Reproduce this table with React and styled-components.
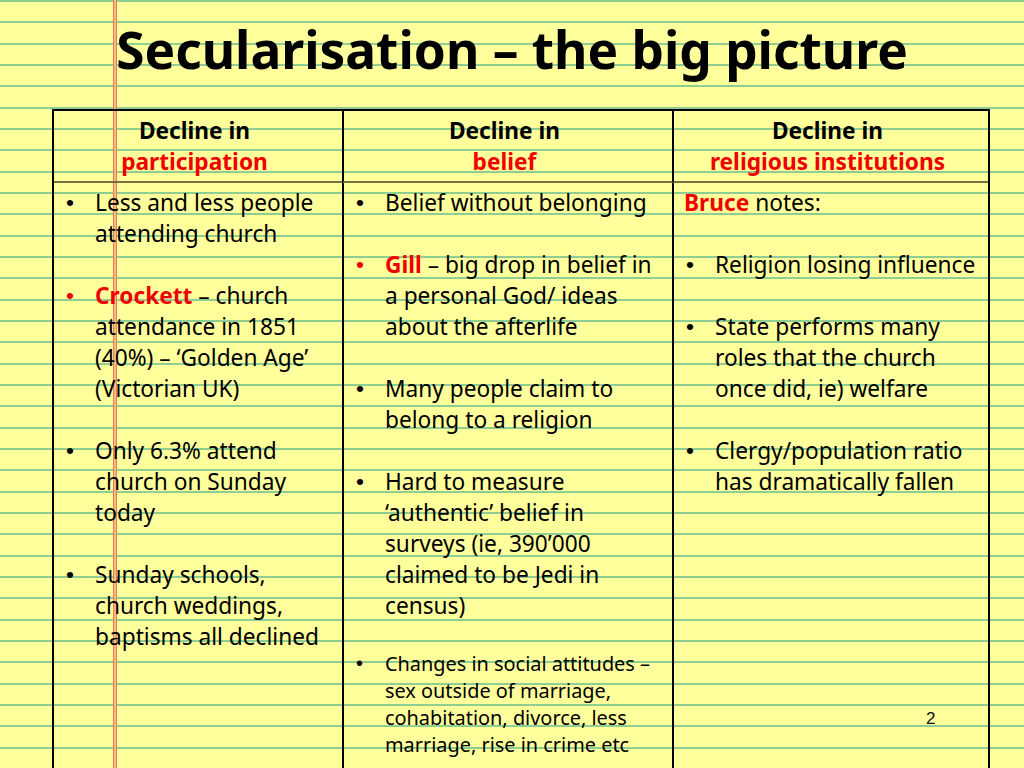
import React from 'react'
import styled, { createGlobalStyle } from 'styled-components'

const GlobalStyle = createGlobalStyle`
  html, body {
    margin: 0;
    padding: 0;
    overflow: hidden;
  }
  * {
    box-sizing: border-box;
  }
`

const RED = '#f20000'

const columns = [
  {
    title: 'participation',
    items: [
      { text: 'Less and less people attending church' },
      { lead: 'Crockett', text: ' – church attendance in 1851 (40%) – ‘Golden Age’ (Victorian UK)', red: true },
      { text: 'Only 6.3% attend church on Sunday today' },
      { text: 'Sunday schools, church weddings, baptisms all declined' },
    ],
  },
  {
    title: 'belief',
    items: [
      { text: 'Belief without belonging' },
      { lead: 'Gill', text: ' – big drop in belief in a personal God/ ideas about the afterlife', red: true },
      { text: 'Many people claim to belong to a religion' },
      { text: 'Hard to measure ‘authentic’ belief in surveys (ie, 390’000 claimed to be Jedi in census)' },
      { text: 'Changes in social attitudes – sex outside of marriage, cohabitation, divorce, less marriage, rise in crime etc', small: true },
    ],
  },
  {
    title: 'religious institutions',
    intro: true,
    items: [
      { text: 'Religion losing influence' },
      { text: 'State performs many roles that the church once did, ie) welfare' },
      { text: 'Clergy/population ratio has dramatically fallen' },
    ],
  },
]

export default function App() {
  return (
    <Page>
      <GlobalStyle />
      <Title>Secularisation – the big picture</Title>
      <Table>
        {columns.map((col, i) => (
          <HeadCell key={'h' + i} divider={i > 0}>
            <div>Decline in</div>
            <RedText>{col.title}</RedText>
          </HeadCell>
        ))}
        {columns.map((col, i) => (
          <BodyCell key={'b' + i} divider={i > 0}>
            {col.intro && (
              <Intro>
                <RedText>Bruce</RedText> notes:
              </Intro>
            )}
            {col.items.map((item, j) => (
              <Item key={j} small={item.small}>
                <Bullet red={item.red}>•</Bullet>
                <span>
                  {item.lead && <RedText>{item.lead}</RedText>}
                  {item.text}
                </span>
              </Item>
            ))}
          </BodyCell>
        ))}
      </Table>
      <PageNumber>2</PageNumber>
    </Page>
  )
}

const Page = styled.div`
  position: relative;
  width: 1024px;
  height: 768px;
  overflow: hidden;
  font-family: "Noto Sans", "Open Sans", sans-serif;
  color: #000;
  background-color: #ffff9c;
  background-image:
    linear-gradient(to right,
      transparent 113px, #ec7f52 113px, #ec7f52 114px,
      #f6b887 114px, #f6b887 116px,
      #ec7f52 116px, #ec7f52 117px, transparent 117px),
    repeating-linear-gradient(to bottom,
      #8fcd93 0px, #8fcd93 2px, transparent 2px, transparent 21.333px);
`

const Title = styled.h1`
  margin: 0;
  padding-top: 19px;
  height: 110px;
  font-size: 51.4px;
  line-height: 60px;
  font-weight: 700;
  text-align: center;
`

const Table = styled.div`
  display: grid;
  grid-template-columns: 288px 330px 316px;
  grid-template-rows: 72px 1fr;
  width: 938px;
  height: 700px;
  margin-left: 52px;
  margin-top: -1px;
  border: 2px solid #000;
  border-bottom: none;
`

const HeadCell = styled.div`
  border-left: ${(p) => (p.divider ? '2px solid #000' : 'none')};
  border-bottom: 2px solid #75703f;
  padding: 4px 7px 0 0;
  text-align: center;
  font-weight: 700;
  font-size: 22.7px;
  line-height: 31px;
`

const BodyCell = styled.div`
  border-left: ${(p) => (p.divider ? '2px solid #000' : 'none')};
  padding: 4px 10px 0 12px;
  font-size: 22.7px;
  line-height: 31px;
`

const RedText = styled.span`
  color: ${RED};
  font-weight: 700;
`

const Intro = styled.div`
  margin-left: -2px;
  margin-bottom: 31px;
`

const Item = styled.div`
  display: grid;
  grid-template-columns: 29px 1fr;
  margin-top: ${(p) => (p.small ? '-2px' : '0')};
  margin-bottom: ${(p) => (p.small ? '0' : '31px')};
  font-size: ${(p) => (p.small ? '19.9px' : '22.7px')};
  line-height: ${(p) => (p.small ? '27px' : '31px')};
`

const Bullet = styled.span`
  color: ${(p) => (p.red ? RED : '#000')};
  font-family: "Liberation Sans", Arial, sans-serif;
`

const PageNumber = styled.div`
  position: absolute;
  left: 926px;
  top: 709px;
  font-family: "Liberation Sans", Arial, sans-serif;
  font-size: 17px;
  line-height: 20px;
  color: #111;
`
